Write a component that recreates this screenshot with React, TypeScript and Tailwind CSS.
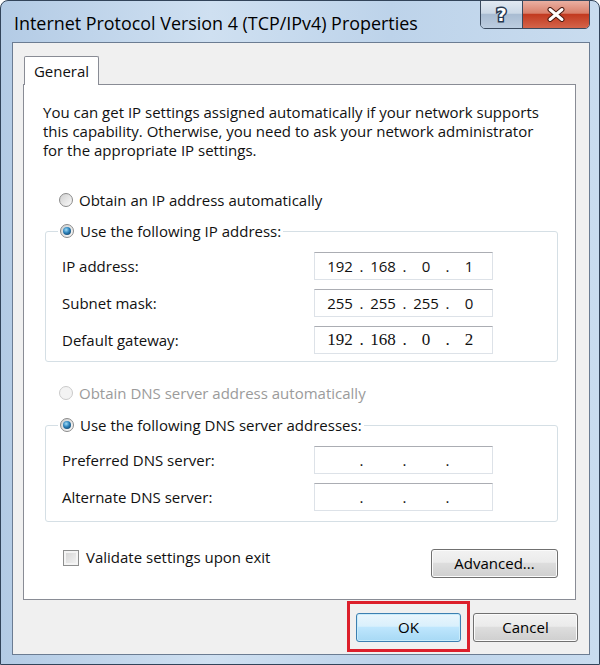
import clsx from "clsx";

const font = "font-['Open_Sans','Noto_Sans',sans-serif]";

function Radio({ checked, disabled }: { checked?: boolean; disabled?: boolean }) {
  return (
    <span
      className={clsx(
        "flex size-[14px] shrink-0 items-center justify-center rounded-full border",
        disabled
          ? "border-[#cacaca] bg-[#f3f3f3]"
          : "border-[#8b8b8b] bg-[linear-gradient(135deg,#cfcfcf,#fbfbfb)]",
      )}
    >
      {checked && (
        <span className="size-[8px] rounded-full bg-[radial-gradient(circle_at_40%_35%,#9fdcf8,#2a7fb8_45%,#0c2c48)]" />
      )}
    </span>
  );
}

function IpBox({ parts, serif }: { parts: string[]; serif?: boolean }) {
  return (
    <div
      className={clsx(
        "flex h-[28px] w-[179px] items-center border border-[#dde2e8] border-t-[#abadb3] bg-white pl-[8px]",
        serif ? "font-['Liberation_Serif',serif] text-[17px]" : "text-[15px]",
      )}
    >
      {parts.map((p, i) => (
        <div key={i} className="flex">
          {i > 0 && <span className="w-[9px] text-center">.</span>}
          <span className="w-[34px] text-center">{p}</span>
        </div>
      ))}
    </div>
  );
}

function Row({ label, children }: { label: string; children: React.ReactNode }) {
  return (
    <div className="flex h-[28px] items-center">
      <span className="w-[252px]">{label}</span>
      {children}
    </div>
  );
}

function Button({ label, primary }: { label: string; primary?: boolean }) {
  return (
    <button
      className={clsx(
        "flex h-full w-full items-center justify-center rounded-[3px] border text-[15px] text-black",
        primary
          ? "border-[#3c7fb1] bg-[linear-gradient(#eaf6fd,#d9f0fc_45%,#bee6fd_50%,#a7d9f5)] shadow-[inset_0_0_0_1px_#c9ecfb]"
          : "border-[#707070] bg-[linear-gradient(#f2f2f2,#ebebeb_45%,#dddddd_50%,#cfcfcf)] shadow-[inset_0_0_0_1px_#fbfbfb]",
      )}
    >
      {label}
    </button>
  );
}

export default function App() {
  const empty = ["", "", "", ""];
  return (
    <div className={clsx("h-[665px] w-[600px] bg-white text-[#111]", font)}>
      <div className="flex h-full w-full flex-col rounded-t-[8px] border border-[#32445a] bg-[linear-gradient(90deg,#b3cbe5,#cfe0f1_35%,#bdd3ea_65%,#c9dcef)]">
        {/* title bar */}
        <div className="flex h-[41px] shrink-0 items-start justify-between">
          <span className="pl-[13px] pt-[9px] text-[17.9px] text-black">
            Internet Protocol Version 4 (TCP/IPv4) Properties
          </span>
          <div className="mr-[9px] -mt-px flex h-[29px] overflow-hidden rounded-b-[5px] border border-[#3a4a5e]">
            <div className="flex w-[42px] items-center justify-center border-r border-[#3a4a5e] bg-[linear-gradient(#e1e9f2,#cbd8e6_45%,#a9bcd2_50%,#bccde0)]">
              <span className="font-['DejaVu_Sans',sans-serif] text-[18px] leading-none font-bold text-white [paint-order:stroke_fill] [-webkit-text-stroke:3px_#26384f]">
                ?
              </span>
            </div>
            <div className="flex w-[66px] items-center justify-center bg-[linear-gradient(#eab0a2,#d9806b_45%,#c23a20_50%,#d4644a)]">
              <svg width="20" height="15" viewBox="0 0 20 15">
                <path d="M4 2.5 L16 12.5 M16 2.5 L4 12.5" stroke="#4b1a10" strokeWidth="5" strokeLinecap="round" />
                <path d="M4 2.5 L16 12.5 M16 2.5 L4 12.5" stroke="#fff" strokeWidth="3" strokeLinecap="round" />
              </svg>
            </div>
          </div>
        </div>

        {/* client area */}
        <div className="ml-[11px] mr-[9px] mb-[9px] flex flex-1 flex-col border border-[#6b7c92] bg-[#f0f0f0]">
          <div className="ml-[10px] mr-[13px] pt-[13px]">
            <div className="relative z-10 -mb-px ml-px flex h-[29px] w-[75px] items-center justify-center rounded-t-[2px] border border-b-0 border-[#898c95] bg-white text-[15px]">
              General
            </div>
            <div className="flex h-[516px] flex-col border border-[#898c95] bg-white text-[15px]">
              <p className="pl-[19px] pt-[18px] leading-[19px]">
                <span className="block whitespace-nowrap">
                  You can get IP settings assigned automatically if your network supports
                </span>
                <span className="block whitespace-nowrap">
                  this capability. Otherwise, you need to ask your network administrator
                </span>
                <span className="block whitespace-nowrap">for the appropriate IP settings.</span>
              </p>

              <div className="mt-[30px] ml-[35px] flex h-[20px] items-center gap-[6px]">
                <Radio />
                <span>Obtain an IP address automatically</span>
              </div>

              <div className="relative mt-[21px] ml-[21px] w-[513px] rounded-[3px] border border-[#d5dfe5] pt-[20px] pb-[7px] pl-[16px]">
                <div className="absolute -top-[11px] left-[12px] flex h-[20px] items-center gap-[6px] bg-white px-[2px]">
                  <Radio checked />
                  <span>Use the following IP address:</span>
                </div>
                <div className="flex flex-col gap-[9px]">
                  <Row label="IP address:">
                    <IpBox parts={["192", "168", "0", "1"]} />
                  </Row>
                  <Row label="Subnet mask:">
                    <IpBox parts={["255", "255", "255", "0"]} />
                  </Row>
                  <Row label="Default gateway:">
                    <IpBox parts={["192", "168", "0", "2"]} serif />
                  </Row>
                </div>
              </div>

              <div className="mt-[21px] ml-[35px] flex h-[20px] items-center gap-[6px] text-[#9b9b9b]">
                <Radio disabled />
                <span>Obtain DNS server address automatically</span>
              </div>

              <div className="relative mt-[22px] ml-[21px] w-[513px] rounded-[3px] border border-[#d5dfe5] pt-[20px] pb-[10px] pl-[16px]">
                <div className="absolute -top-[11px] left-[12px] flex h-[20px] items-center gap-[6px] bg-white px-[2px]">
                  <Radio checked />
                  <span>Use the following DNS server addresses:</span>
                </div>
                <div className="flex flex-col gap-[9px]">
                  <Row label="Preferred DNS server:">
                    <IpBox parts={empty} />
                  </Row>
                  <Row label="Alternate DNS server:">
                    <IpBox parts={empty} />
                  </Row>
                </div>
              </div>

              <div className="mt-[27px] ml-[39px] flex w-[495px] items-start justify-between">
                <div className="flex h-[17px] items-center gap-[7px]">
                  <span className="size-[16px] border border-[#8e8f8f] bg-[linear-gradient(135deg,#d2d2d2,#f6f6f6)] shadow-[inset_0_0_0_2px_#f4f4f4]" />
                  <span>Validate settings upon exit</span>
                </div>
                <div className="h-[29px] w-[127px]">
                  <Button label="Advanced..." />
                </div>
              </div>
            </div>
          </div>

          <div className="mt-[13px] mr-[11px] flex justify-end gap-[12px]">
            <div className="relative h-[29px] w-[105px]">
              <div className="absolute -left-[9px] -top-[12px] h-[51px] w-[123px] border-[3px] border-[#dc1f2b]" />
              <Button label="OK" primary />
            </div>
            <div className="h-[29px] w-[105px]">
              <Button label="Cancel" />
            </div>
          </div>
        </div>
      </div>
    </div>
  );
}
